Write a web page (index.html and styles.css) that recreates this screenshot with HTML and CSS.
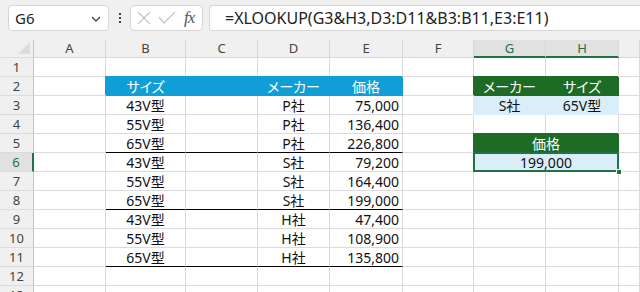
FILE: index.html
```html
<!DOCTYPE html>
<html lang="ja">
<head>
<meta charset="utf-8">
<link rel="stylesheet" href="styles.css">
</head>
<body>
<div class="app">
  <div class="topbar">
    <div class="namebox">
      <span class="name">G6</span>
      <svg class="chev" width="10" height="6" viewBox="0 0 10 6"><path d="M1 1 L5 5 L9 1" fill="none" stroke="#444" stroke-width="1.3"/></svg>
    </div>
    <div class="dots"><i></i><i></i><i></i></div>
    <div class="fxbox">
      <svg width="14" height="14" viewBox="0 0 14 14"><path d="M1 1 L13 13 M13 1 L1 13" stroke="#c4c4c4" stroke-width="1.2" fill="none"/></svg>
      <svg width="18" height="14" viewBox="0 0 18 14"><path d="M1 6 L6 12 L17 1" stroke="#c4c4c4" stroke-width="1.2" fill="none"/></svg>
      <span class="fx">fx</span>
    </div>
    <div class="formula">=XLOOKUP(G3&amp;H3,D3:D11&amp;B3:B11,E3:E11)</div>
  </div>
  <div class="sheet">
    <div class="corner"></div>
    <div class="ch">A</div><div class="ch">B</div><div class="ch">C</div><div class="ch">D</div><div class="ch">E</div><div class="ch">F</div><div class="ch chs">G</div><div class="ch chs">H</div><div class="ch"></div>

    <div class="rh">1</div><div class="c"></div><div class="c"></div><div class="c"></div><div class="c"></div><div class="c"></div><div class="c"></div><div class="c"></div><div class="c"></div><div class="c"></div>

    <div class="rh">2</div><div class="c"></div><div class="c ctr hb">サイズ</div><div class="c hb"></div><div class="c ctr hb">メーカー</div><div class="c ctr hb">価格</div><div class="c"></div><div class="c ctr hg">メーカー</div><div class="c ctr hg">サイズ</div><div class="c"></div>

    <div class="rh">3</div><div class="c"></div><div class="c ctr">43V型</div><div class="c"></div><div class="c ctr">P社</div><div class="c r">75,000</div><div class="c"></div><div class="c ctr lb">S社</div><div class="c ctr lb">65V型</div><div class="c"></div>

    <div class="rh">4</div><div class="c"></div><div class="c ctr">55V型</div><div class="c"></div><div class="c ctr">P社</div><div class="c r">136,400</div><div class="c"></div><div class="c"></div><div class="c"></div><div class="c"></div>

    <div class="rh">5</div><div class="c"></div><div class="c ctr bb">65V型</div><div class="c bb"></div><div class="c ctr bb">P社</div><div class="c r bb">226,800</div><div class="c"></div><div class="c ctr hg span2">価格</div><div class="c"></div>

    <div class="rh rhs">6</div><div class="c"></div><div class="c ctr">43V型</div><div class="c"></div><div class="c ctr">S社</div><div class="c r">79,200</div><div class="c"></div><div class="c ctr lb span2 sel">199,000<span class="handle"></span></div><div class="c"></div>

    <div class="rh">7</div><div class="c"></div><div class="c ctr">55V型</div><div class="c"></div><div class="c ctr">S社</div><div class="c r">164,400</div><div class="c"></div><div class="c"></div><div class="c"></div><div class="c"></div>

    <div class="rh">8</div><div class="c"></div><div class="c ctr bb">65V型</div><div class="c bb"></div><div class="c ctr bb">S社</div><div class="c r bb">199,000</div><div class="c"></div><div class="c"></div><div class="c"></div><div class="c"></div>

    <div class="rh">9</div><div class="c"></div><div class="c ctr">43V型</div><div class="c"></div><div class="c ctr">H社</div><div class="c r">47,400</div><div class="c"></div><div class="c"></div><div class="c"></div><div class="c"></div>

    <div class="rh">10</div><div class="c"></div><div class="c ctr">55V型</div><div class="c"></div><div class="c ctr">H社</div><div class="c r">108,900</div><div class="c"></div><div class="c"></div><div class="c"></div><div class="c"></div>

    <div class="rh">11</div><div class="c"></div><div class="c ctr bb">65V型</div><div class="c bb"></div><div class="c ctr bb">H社</div><div class="c r bb">135,800</div><div class="c"></div><div class="c"></div><div class="c"></div><div class="c"></div>

    <div class="rh">12</div><div class="c"></div><div class="c"></div><div class="c"></div><div class="c"></div><div class="c"></div><div class="c"></div><div class="c"></div><div class="c"></div><div class="c"></div>

    <div class="rh">13</div><div class="c"></div><div class="c"></div><div class="c"></div><div class="c"></div><div class="c"></div><div class="c"></div><div class="c"></div><div class="c"></div><div class="c"></div>
  </div>
</div>
</body>
</html>
```
FILE: styles.css
```css
* { box-sizing: border-box; }
html, body { margin: 0; padding: 0; background: #fff; }
.app { width: 640px; height: 292px; overflow: hidden; font-family: "Noto Sans CJK JP", "Noto Sans", sans-serif; }

.topbar {
  height: 40px;
  background: #f0f0f0;
  display: flex;
  align-items: flex-start;
  padding: 5px 0 0 8px;
  white-space: nowrap;
}
.namebox {
  width: 101px; height: 26px;
  background: #fff;
  border: 1px solid #d6d6d6;
  border-radius: 4px;
  display: flex; align-items: center; justify-content: space-between;
  padding: 0 7px 0 6px;
  font-family: "Noto Sans", sans-serif;
  font-size: 15px; color: #222;
}
.chev { margin-top: 2px; }
.dots {
  width: 21px; height: 26px;
  display: flex; flex-direction: column; align-items: center; justify-content: center; gap: 2px;
}
.dots i { width: 2px; height: 2px; background: #444; display: block; }
.fxbox {
  width: 73px; height: 26px;
  background: #fff;
  border: 1px solid #d6d6d6;
  border-radius: 4px;
  display: flex; align-items: center;
  padding: 0 0 0 6px; gap: 7px;
}
.fx {
  font-family: "Liberation Serif", serif; font-style: italic;
  font-size: 17px; color: #555; letter-spacing: -1px; margin-left: 1px;
}
.formula {
  margin-left: 6px;
  flex: 1; height: 26px;
  background: #fff;
  border: 1px solid #d6d6d6;
  border-right: none;
  border-radius: 4px 0 0 4px;
  padding: 0 0 0 15px;
  font-family: "Noto Sans", sans-serif;
  font-size: 16px; line-height: 24px; color: #222;
}

.sheet {
  display: grid;
  grid-template-columns: 34px 72px 80px 72px 72px 73px 71px 72px 73px 1fr;
  grid-template-rows: 18px repeat(13, 19px);
  height: 252px;
  overflow: hidden;
  font-family: "Noto Sans", "Noto Sans CJK JP", sans-serif;
  font-feature-settings: "palt";
  font-size: 14px;
}
.corner {
  background: #f0f0f0;
  border-right: 1px solid #c6c6c6;
  border-bottom: 1px solid #dcdcdc;
  position: relative;
}
.corner::after {
  content: ""; position: absolute; right: 3px; bottom: 3px;
  border-style: solid; border-width: 0 0 12px 12px;
  border-color: transparent transparent #dcdcdc transparent;
}
.ch {
  background: #f0f0f0;
  border-right: 1px solid #d8d8d8;
  border-bottom: 1px solid #d8d8d8;
  text-align: center;
  font-family: "Noto Sans", sans-serif;
  font-size: 13px; line-height: 17px; color: #444;
}
.ch.chs { background: #e1e1e1; color: #1e7145; border-bottom: 2px solid #217346; }
.rh {
  background: #f0f0f0;
  border-right: 1px solid #c6c6c6;
  border-bottom: 1px solid #dcdcdc;
  text-align: center;
  font-family: "Noto Sans", sans-serif;
  font-size: 13px; line-height: 18px; color: #444;
}
.rh.rhs { background: #e1e1e1; color: #1e7145; border-right: 2px solid #217346; }

.c {
  border-right: 1px solid #dadada;
  border-bottom: 1px solid #dadada;
  padding: 0 3px;
  line-height: 19px;
  color: #111;
  white-space: nowrap;
  overflow: visible;
}
.ctr { text-align: center; }
.r { text-align: right; }
.hb { background: #0f9ed5; border-color: #0f9ed5; color: #fff; box-shadow: -1px -1px 0 0 #0f9ed5; }
.hg { background: #1d6b25; border-color: #1d6b25; color: #fff; box-shadow: -1px -1px 0 0 #1d6b25; }
.lb { background: #daeef9; border-color: #daeef9; box-shadow: -1px 0 0 0 #daeef9; }
.bb { border-bottom-color: #000; }
.span2 { grid-column: span 2; }
.sel { position: relative; }
.sel::after {
  content: ""; position: absolute;
  left: -1px; top: -1px; right: -1px; bottom: -1px;
  border: 2px solid #217346;
}
.handle {
  position: absolute; right: -4px; bottom: -4px;
  width: 6px; height: 6px; background: #217346;
  border: 1px solid #fff; z-index: 2;
}
```
